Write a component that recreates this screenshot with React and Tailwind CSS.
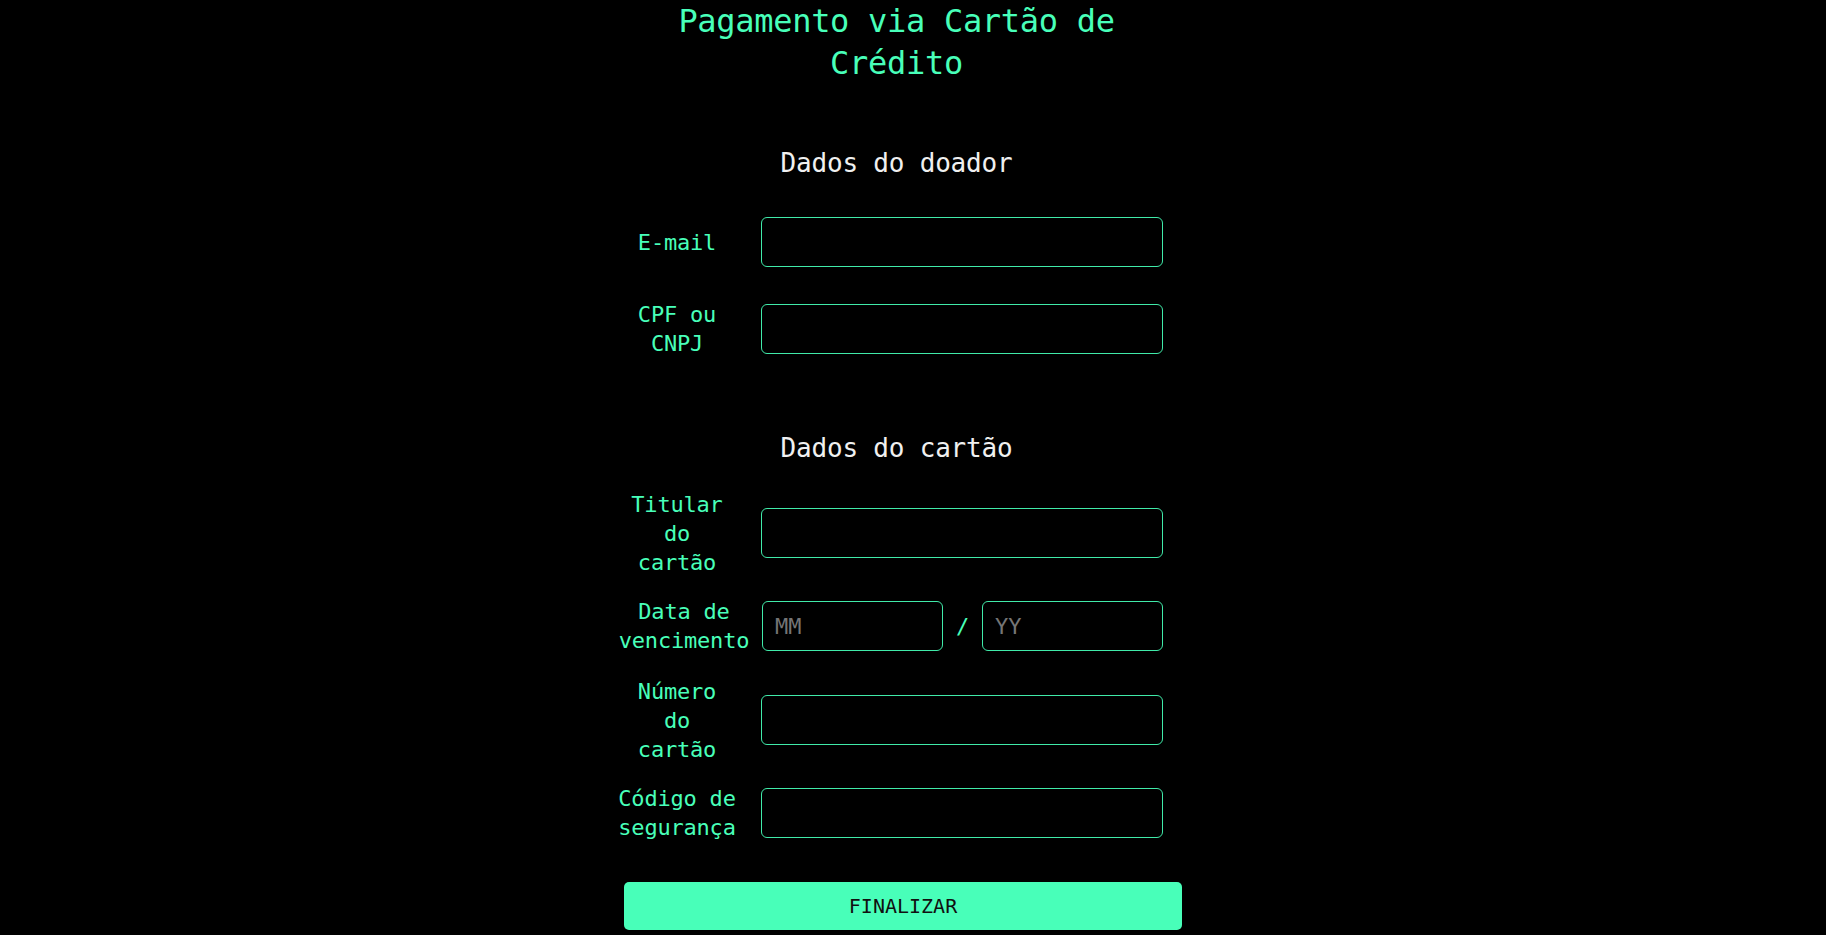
import React from "react";

const font = { fontFamily: '"DejaVu Sans Mono", "Liberation Mono", monospace' };

function Label({ lines, wide }) {
  return (
    <div
      className={`${wide ? "w-[132px]" : "w-[118px]"} shrink-0 text-center text-[22px] leading-[29px] text-[#48ffb9] whitespace-nowrap tracking-[-0.2px]`}
    >
      {lines.map((l, i) => (
        <div key={i}>{l}</div>
      ))}
    </div>
  );
}

function Field({ lines, className = "" }) {
  return (
    <div className={`flex items-center h-[50px] gap-[25px] ${className}`}>
      <Label lines={lines} />
      <input
        type="text"
        className="w-[402px] h-[50px] rounded-[6px] border border-[#40eaa9] bg-transparent px-3 text-[22px] text-[#48ffb9] outline-none"
        style={font}
      />
    </div>
  );
}

export default function App() {
  return (
    <div className="min-h-screen bg-black overflow-hidden" style={font}>
      <div className="ml-[618px] w-[564px] flex flex-col">
        <h1 className="w-[557px] text-center text-[32px] leading-[42px] text-[#48ffb9] font-normal tracking-[-0.3px]">
          Pagamento via Cartão de
          <br />
          Crédito
        </h1>

        <h2 className="mt-[62px] w-[557px] text-center text-[26px] leading-[34px] text-[#f0f0f0] font-normal tracking-[-0.2px]">
          Dados do doador
        </h2>

        <Field lines={["E-mail"]} className="mt-[37px]" />
        <Field lines={["CPF ou", "CNPJ"]} className="mt-[37px]" />

        <h2 className="mt-[77px] w-[557px] text-center text-[26px] leading-[34px] text-[#f0f0f0] font-normal tracking-[-0.2px]">
          Dados do cartão
        </h2>

        <Field lines={["Titular", "do", "cartão"]} className="mt-[43px]" />

        <div className="mt-[43px] flex items-center h-[50px] gap-[12px]">
          <Label lines={["Data de", "vencimento"]} wide />
          <div className="flex items-center w-[401px]">
            <input
              type="text"
              placeholder="MM"
              className="w-[181px] h-[50px] rounded-[6px] border border-[#40eaa9] bg-transparent px-3 text-[22px] text-[#48ffb9] placeholder:text-[#757575] outline-none"
              style={font}
            />
            <span className="flex-1 text-center text-[22px] text-[#48ffb9]">/</span>
            <input
              type="text"
              placeholder="YY"
              className="w-[181px] h-[50px] rounded-[6px] border border-[#40eaa9] bg-transparent px-3 text-[22px] text-[#48ffb9] placeholder:text-[#757575] outline-none"
              style={font}
            />
          </div>
        </div>

        <Field lines={["Número", "do", "cartão"]} className="mt-[44px]" />
        <Field lines={["Código de", "segurança"]} className="mt-[43px]" />

        <button
          type="button"
          className="mt-[44px] ml-[6px] w-[558px] h-[48px] rounded-[5px] bg-[#48ffb9] text-[20px] leading-[24px] font-normal text-[#111111] flex items-center justify-center"
          style={font}
        >
          FINALIZAR
        </button>
      </div>
    </div>
  );
}
